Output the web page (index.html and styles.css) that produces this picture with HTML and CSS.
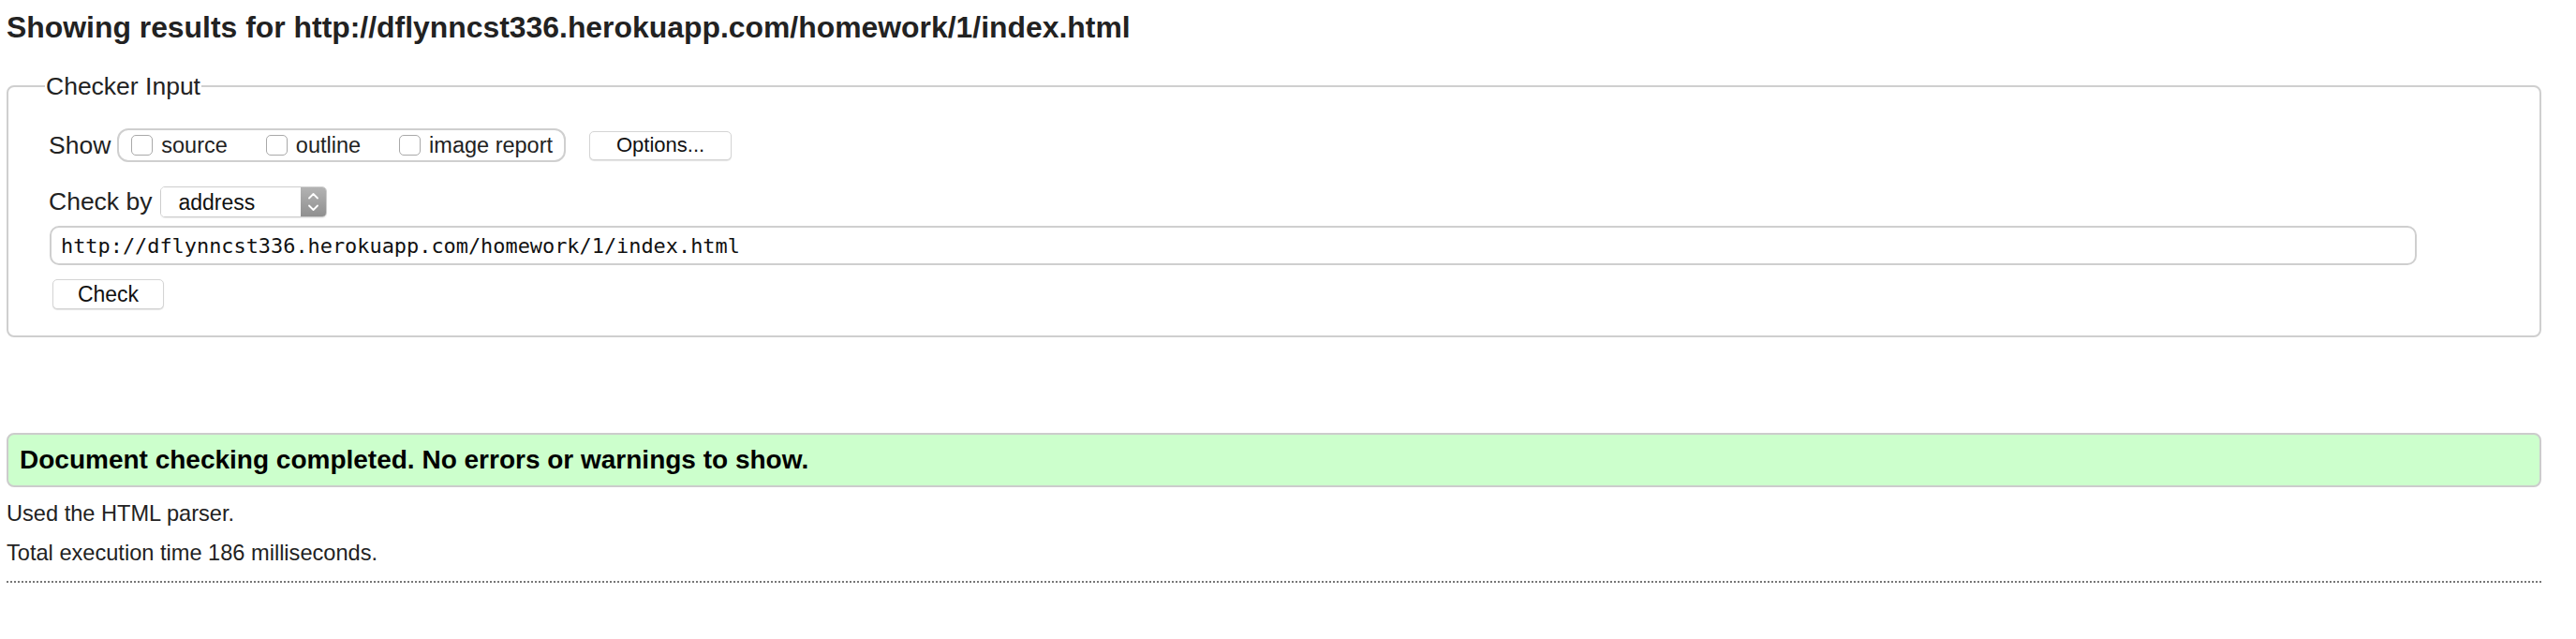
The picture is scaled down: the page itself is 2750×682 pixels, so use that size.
FILE: index.html
```html
<!DOCTYPE html>
<html lang="en">
<head>
<meta charset="utf-8">
<title>Showing results for http://dflynncst336.herokuapp.com/homework/1/index.html</title>
<link rel="stylesheet" href="styles.css">
</head>
<body>
<h2 class="results-title">Showing results for http://dflynncst336.herokuapp.com/homework/1/index.html</h2>
<form class="checker-form">
  <fieldset class="checker">
    <legend class="checker-legend">Checker Input</legend>
    <div class="row row-show">
      <span class="row-label label-show">Show</span>
      <span class="checkgroup">
        <label class="opt"><input type="checkbox" class="cb"><span>source</span></label>
        <label class="opt"><input type="checkbox" class="cb"><span>outline</span></label>
        <label class="opt"><input type="checkbox" class="cb"><span>image report</span></label>
      </span>
      <button type="button" class="btn btn-options">Options...</button>
    </div>
    <div class="row row-checkby">
      <span class="row-label label-checkby">Check by</span>
      <span class="select-wrap">
        <select class="select"><option>address</option></select>
        <span class="select-arrow">
          <svg width="27" height="31" viewBox="0 0 27 31">
            <polyline points="9,11.5 13.5,7 18,11.5" fill="none" stroke="#fff" stroke-width="1.8" stroke-linecap="round" stroke-linejoin="round"/>
            <polyline points="9,19.5 13.5,24 18,19.5" fill="none" stroke="#fff" stroke-width="1.8" stroke-linecap="round" stroke-linejoin="round"/>
          </svg>
        </span>
      </span>
    </div>
    <div class="row row-url">
      <input type="text" class="url-input" value="http://dflynncst336.herokuapp.com/homework/1/index.html">
    </div>
    <div class="row row-submit">
      <button type="button" class="btn btn-check">Check</button>
    </div>
  </fieldset>
</form>
<div class="success">Document checking completed. No errors or warnings to show.</div>
<p class="info first">Used the HTML parser.</p>
<p class="info">Total execution time 186 milliseconds.</p>
<div class="separator"></div>
</body>
</html>
```
FILE: styles.css
```css
html, body {
  background: #fff;
}
body {
  margin: 0;
  padding: 0 37px 0 7px;
  font-family: "Liberation Sans", Arial, Helvetica, sans-serif;
  color: #222;
}
.results-title {
  font-size: 31.9px;
  font-weight: bold;
  line-height: 38px;
  margin: 10px 0 0;
  color: #222;
}
.checker-form {
  margin: 0;
}
.checker {
  margin: 29px 0 0;
  border: 2px solid #cfcfcf;
  border-radius: 8px;
  padding: 30px 0 28px 43px;
  min-width: 0;
}
.checker-legend {
  font-size: 26.5px;
  line-height: 30px;
  padding: 0 1px;
  margin-left: -4px;
  color: #222;
}
.row {
  display: flex;
  align-items: center;
}
.row-label {
  font-size: 26.5px;
  color: #222;
}
.row-show {
  height: 36px;
}
.label-show {
  margin-right: 7px;
}
.checkgroup {
  display: flex;
  align-items: center;
  gap: 41px;
  height: 36px;
  box-sizing: border-box;
  border: 2px solid #cfcfcf;
  border-radius: 12px;
  padding: 0 12px 0 13px;
}
.opt {
  display: flex;
  align-items: center;
  gap: 9px;
  font-size: 23.5px;
  color: #222;
}
.cb {
  appearance: none;
  -webkit-appearance: none;
  width: 23px;
  height: 22px;
  margin: 0;
  border: 1px solid #a9a9a9;
  border-radius: 5px;
  background: #fff;
  box-sizing: border-box;
}
.btn {
  appearance: none;
  -webkit-appearance: none;
  background: #fff;
  border: 1px solid #d4d4d4;
  border-radius: 5px;
  box-shadow: 0 1px 1px rgba(0, 0, 0, 0.12);
  font-family: "Liberation Sans", Arial, Helvetica, sans-serif;
  color: #111;
  padding: 0;
  margin: 0;
  box-sizing: border-box;
}
.btn-options {
  margin-left: 25px;
  width: 152px;
  height: 31px;
  font-size: 22px;
}
.row-checkby {
  margin-top: 26px;
  height: 33px;
}
.label-checkby {
  margin-right: 9px;
}
.select-wrap {
  display: flex;
  width: 178px;
  height: 33px;
  box-sizing: border-box;
  border: 1px solid #cdcdcd;
  border-radius: 5px;
  overflow: hidden;
  box-shadow: 0 1px 1px rgba(0, 0, 0, 0.08);
}
.select {
  appearance: none;
  -webkit-appearance: none;
  flex: 1;
  border: 0;
  margin: 0;
  padding: 0 0 0 18px;
  background: #fff;
  font-family: "Liberation Sans", Arial, Helvetica, sans-serif;
  font-size: 23px;
  color: #111;
  outline: none;
}
.select-arrow {
  display: flex;
  width: 27px;
  background: linear-gradient(#b3b3b3, #8f8f8f);
}
.row-url {
  margin-top: 9px;
}
.url-input {
  margin: 0 0 0 1px;
  width: 2527px;
  height: 42px;
  box-sizing: border-box;
  border: 2px solid #cfcfcf;
  border-radius: 10px;
  padding: 0 10px;
  font-family: "DejaVu Sans Mono", "Liberation Mono", monospace;
  font-size: 21.9px;
  color: #111;
  background: #fff;
  outline: none;
}
.row-submit {
  margin-top: 15px;
}
.btn-check {
  margin-left: 4px;
  width: 119px;
  height: 32px;
  font-size: 23px;
}
.success {
  margin-top: 102px;
  height: 58px;
  box-sizing: border-box;
  border: 2px solid #cccccc;
  border-radius: 8px;
  background: #ccffcc;
  padding: 0 12px;
  font-size: 28px;
  font-weight: bold;
  line-height: 54px;
  color: #000;
}
.info {
  margin: 12px 0 0;
  font-size: 23.6px;
  line-height: 30px;
  color: #222;
}
.info.first {
  margin-top: 13px;
}
.separator {
  margin-top: 15px;
  border-bottom: 2px dotted #777;
}
```
